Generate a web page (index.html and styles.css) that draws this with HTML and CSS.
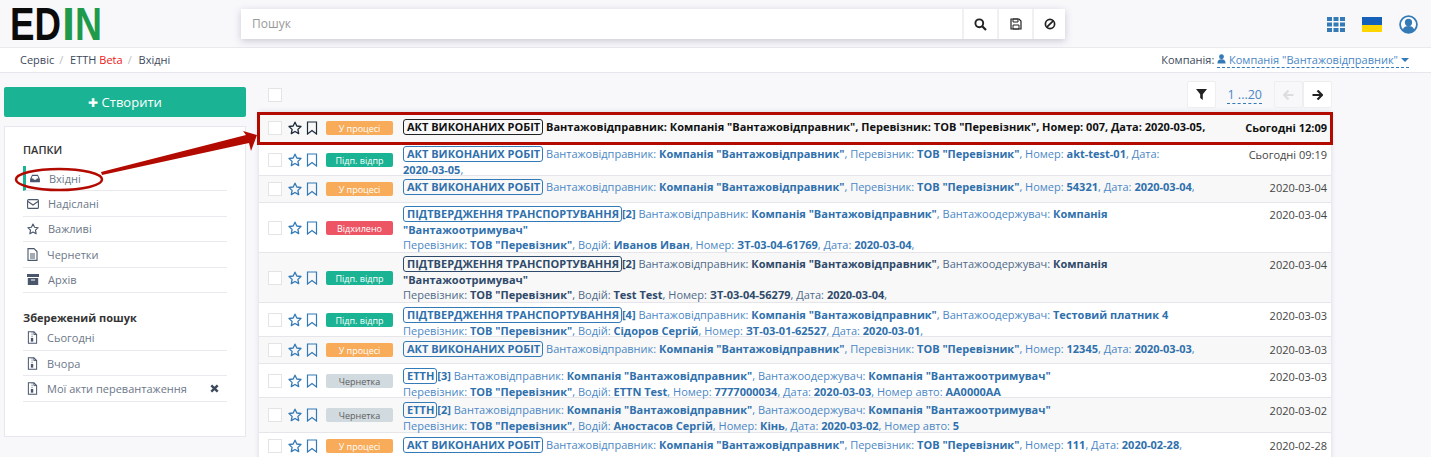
FILE: index.html
```html
<!DOCTYPE html>
<html>
	<head>
		<meta charset="UTF-8">
		<title>Вхідні</title>
		<link rel="stylesheet" href="styles.css">
	</head>
	<body>
		<svg class="defs" width="0" height="0">
			<symbol id="star" viewBox="0 0 14 14"><polygon points="7,1.2 8.8,5 13,5.5 9.9,8.4 10.7,12.6 7,10.5 3.3,12.6 4.1,8.4 1,5.5 5.2,5" fill="none" stroke="currentColor" stroke-width="1.3" stroke-linejoin="round"/></symbol>
			<symbol id="mark" viewBox="0 0 12 14"><path d="M1.5 1h9v12L6 9.5 1.5 13z" fill="none" stroke="currentColor" stroke-width="1.2"/></symbol>
			<symbol id="saved" viewBox="0 0 12 14"><path d="M1.5.8h6l3 3v9.400h-9z" fill="none" stroke="currentColor" stroke-width="1.100"/><path d="M7.500.8v3h3M5 2h1M5 4h1M5 6h1" fill="none" stroke="currentColor"/><rect x="4.200" y="7.500" width="2.600" height="4" fill="currentColor"/></symbol>
		</svg>

		<!-- шапка -->
		<header class="top">
			<svg class="logo" width="101" height="47" viewBox="0 0 101 47">
				<text x="10" y="40" textLength="51" lengthAdjust="spacingAndGlyphs" class="logo-dark">ED</text>
				<text x="62" y="40" textLength="13" lengthAdjust="spacingAndGlyphs" class="logo-green">I</text>
				<text x="75" y="40" textLength="27" lengthAdjust="spacingAndGlyphs" class="logo-green">N</text>
			</svg>
			<div class="search">
				<div class="search-input">Пошук</div>
				<button class="search-btn">
					<svg width="13" height="13" viewBox="0 0 13 13"><circle cx="5.300" cy="5.300" r="3.900" fill="none" stroke="#222" stroke-width="1.900"/><path d="M8.200 8.200l3.800 3.800" stroke="#222" stroke-width="2.200"/></svg>
				</button>
				<button class="search-btn">
					<svg width="12" height="12" viewBox="0 0 12 12"><path d="M1 1h8l2 2v8H1z" fill="none" stroke="#222" stroke-width="1.200"/><path d="M3 1h5v3H3zM3 7h6v4H3z" fill="none" stroke="#222"/></svg>
				</button>
				<button class="search-btn">
					<svg width="12" height="12" viewBox="0 0 12 12"><circle cx="6" cy="6" r="4.600" fill="none" stroke="#222" stroke-width="1.700"/><path d="M2.800 9.200l6.400-6.400" stroke="#222" stroke-width="1.700"/></svg>
				</button>
			</div>
			<div class="top-icons">
				<svg width="18" height="15" viewBox="0 0 18 15" fill="#337ab7">
					<rect width="5" height="4"/><rect x="6.500" width="5" height="4"/><rect x="13" width="5" height="4"/>
					<rect y="5.500" width="5" height="4"/><rect x="6.500" y="5.500" width="5" height="4"/><rect x="13" y="5.500" width="5" height="4"/>
					<rect y="11" width="5" height="4"/><rect x="6.500" y="11" width="5" height="4"/><rect x="13" y="11" width="5" height="4"/>
				</svg>
				<div class="flag"></div>
				<svg width="19" height="19" viewBox="0 0 19 19"><circle cx="9.500" cy="9.500" r="8.400" fill="#fff" stroke="#337ab7" stroke-width="1.800"/><circle cx="9.500" cy="7.400" r="3.600" fill="#337ab7"/><path d="M3.600 15c1-3.200 3.200-4 5.900-4s4.900.8 5.900 4a8 8 0 0 1-11.800 0z" fill="#337ab7"/></svg>
			</div>
		</header>

		<!-- хлібні крихти -->
		<nav class="crumbs">
			<div class="crumbs-path">
				<span>Сервіс</span><i>/</i>
				<span>ЕТТН <b>Beta</b></span><i>/</i>
				<span>Вхідні</span>
			</div>
			<div class="company">
				Компанія:
				<a href="#"><svg width="9" height="10" viewBox="0 0 10 11" fill="#337ab7"><circle cx="5" cy="3" r="2.700"/><path d="M.5 10.500c0-3.500 1.500-4.800 4.500-4.800s4.500 1.300 4.500 4.800z"/></svg> Компанія "Вантажовідправник"<em class="caret"></em></a>
			</div>
		</nav>

		<div class="main">
			<!-- ліва колонка -->
			<aside class="side">
				<button class="create"><span class="plus">✚</span> Створити</button>
				<div class="panel">
					<h4 class="folders-title">ПАПКИ</h4>
					<ul class="folders">
						<li class="active">
							<svg width="10" height="9" viewBox="0 0 12 11"><path d="M2.500 1h7L12 6v4H0V6z" fill="#49566b"/><path d="M3 2.500h6l1.300 3H8L7.300 7H4.700L4 5.500H1.700z" fill="#fff"/></svg>
							<span>Вхідні</span>
						</li>
						<li>
							<svg width="12" height="10" viewBox="0 0 12 10"><rect x=".6" y=".6" width="10.800" height="8.800" rx="1" fill="none" stroke="#49566b" stroke-width="1.100"/><path d="M1 2.500L6 6l5-3.500" fill="none" stroke="#49566b" stroke-width="1.100"/></svg>
							<span>Надіслані</span>
						</li>
						<li>
							<svg width="12" height="12" viewBox="0 0 14 14"><use href="#star" color="#49566b"/></svg>
							<span>Важливі</span>
						</li>
						<li>
							<svg width="11" height="13" viewBox="0 0 11 13"><path d="M1 .6h6l3 3v8.800H1z" fill="none" stroke="#49566b" stroke-width="1.100"/><path d="M3 6h5M3 8h5M3 10h5" stroke="#49566b"/></svg>
							<span>Чернетки</span>
						</li>
						<li>
							<svg width="12" height="11" viewBox="0 0 12 11" fill="#49566b"><rect width="12" height="3"/><path d="M.8 4h10.400v7H.8z"/><rect x="4" y="5.500" width="4" height="1" fill="#fff"/></svg>
							<span>Архів</span>
						</li>
					</ul>
					<h4 class="saved-title">Збережений пошук</h4>
					<ul class="folders saved">
						<li><svg width="11" height="13"><use href="#saved" color="#49566b"/></svg><span>Сьогодні</span></li>
						<li><svg width="11" height="13"><use href="#saved" color="#49566b"/></svg><span>Вчора</span></li>
						<li>
							<svg width="11" height="13"><use href="#saved" color="#49566b"/></svg><span>Мої акти перевантаження</span>
							<svg class="remove" width="9" height="9" viewBox="0 0 9 9"><path d="M1.300 1.300l6.400 6.400M7.700 1.300L1.300 7.700" stroke="#3d4a5c" stroke-width="2.400"/></svg>
						</li>
					</ul>
				</div>
			</aside>

			<!-- список документів -->
			<section class="content">
				<div class="toolbar">
					<div class="check head-check"></div>
					<div class="tools">
						<button class="tool"><svg width="11" height="11" viewBox="0 0 11 11"><path d="M0 0h11L6.800 5.200V11L4.200 9V5.200z" fill="#222"/></svg></button>
						<a class="pages" href="#">1 ...20</a>
						<div class="pager">
							<button class="tool off"><svg width="11" height="10" viewBox="0 0 11 10"><path d="M5.500.5L1 5l4.500 4.500M1.500 5H10.500" fill="none" stroke="#ddd" stroke-width="2.200"/></svg></button>
							<button class="tool"><svg width="11" height="10" viewBox="0 0 11 10"><path d="M5.500.5L10 5 5.500 9.500M9.500 5H.5" fill="none" stroke="#222" stroke-width="2.200"/></svg></button>
						</div>
					</div>
				</div>

				<div class="rows">
					<div class="row gray unread h32 p7">
						<div class="check"></div>
						<svg class="star"><use href="#star"/></svg><svg class="mark"><use href="#mark"/></svg>
						<div class="badge orange">У процесі</div>
						<div class="text"><span class="doc">АКТ ВИКОНАНИХ РОБІТ</span> Вантажовідправник: <b>Компанія "Вантажовідправник"</b>, Перевізник: <b>ТОВ "Перевізник"</b>, Номер: <b>007</b>, Дата: <b>2020-03-05</b>,</div>
						<div class="date">Сьогодні 12:09</div>
					</div>
					<div class="row h32 p2">
						<div class="check"></div>
						<svg class="star"><use href="#star"/></svg><svg class="mark"><use href="#mark"/></svg>
						<div class="badge green">Підп. відпр</div>
						<div class="text"><span class="doc">АКТ ВИКОНАНИХ РОБІТ</span> Вантажовідправник: <b>Компанія "Вантажовідправник"</b>, Перевізник: <b>ТОВ "Перевізник"</b>, Номер: <b>akt-test-01</b>, Дата: <b class="nb">2020-03-05</b>,</div>
						<div class="date">Сьогодні 09:19</div>
					</div>
					<div class="row gray h27 p3">
						<div class="check"></div>
						<svg class="star"><use href="#star"/></svg><svg class="mark"><use href="#mark"/></svg>
						<div class="badge orange">У процесі</div>
						<div class="text"><span class="doc">АКТ ВИКОНАНИХ РОБІТ</span> Вантажовідправник: <b>Компанія "Вантажовідправник"</b>, Перевізник: <b>ТОВ "Перевізник"</b>, Номер: <b>54321</b>, Дата: <b>2020-03-04</b>,</div>
						<div class="date">2020-03-04</div>
					</div>
					<div class="row h50 p3">
						<div class="check"></div>
						<svg class="star"><use href="#star"/></svg><svg class="mark"><use href="#mark"/></svg>
						<div class="badge red">Відхилено</div>
						<div class="text"><span class="doc">ПІДТВЕРДЖЕННЯ ТРАНСПОРТУВАННЯ</span><b>[2]</b> Вантажовідправник: <b>Компанія "Вантажовідправник"</b>, Вантажоодержувач: <b>Компанія "Вантажоотримувач"</b><br>Перевізник: <b>ТОВ "Перевізник"</b>, Водій: <b>Иванов Иван</b>, Номер: <b>ЗТ-03-04-61769</b>, Дата: <b>2020-03-04</b>,</div>
						<div class="date">2020-03-04</div>
					</div>
					<div class="row gray dark h50 p3">
						<div class="check"></div>
						<svg class="star"><use href="#star"/></svg><svg class="mark"><use href="#mark"/></svg>
						<div class="badge green">Підп. відпр</div>
						<div class="text"><span class="doc">ПІДТВЕРДЖЕННЯ ТРАНСПОРТУВАННЯ</span><b>[2]</b> Вантажовідправник: <b>Компанія "Вантажовідправник"</b>, Вантажоодержувач: <b>Компанія "Вантажоотримувач"</b><br>Перевізник: <b>ТОВ "Перевізник"</b>, Водій: <b>Test Test</b>, Номер: <b>ЗТ-03-04-56279</b>, Дата: <b>2020-03-04</b>,</div>
						<div class="date">2020-03-04</div>
					</div>
					<div class="row h34 p4">
						<div class="check"></div>
						<svg class="star"><use href="#star"/></svg><svg class="mark"><use href="#mark"/></svg>
						<div class="badge green">Підп. відпр</div>
						<div class="text"><span class="doc">ПІДТВЕРДЖЕННЯ ТРАНСПОРТУВАННЯ</span><b>[4]</b> Вантажовідправник: <b>Компанія "Вантажовідправник"</b>, Вантажоодержувач: <b>Тестовий платник 4</b><br>Перевізник: <b>ТОВ "Перевізник"</b>, Водій: <b>Сідоров Сергій</b>, Номер: <b>ЗТ-03-01-62527</b>, Дата: <b>2020-03-01</b>,</div>
						<div class="date">2020-03-03</div>
					</div>
					<div class="row gray h27 p4">
						<div class="check"></div>
						<svg class="star"><use href="#star"/></svg><svg class="mark"><use href="#mark"/></svg>
						<div class="badge orange">У процесі</div>
						<div class="text"><span class="doc">АКТ ВИКОНАНИХ РОБІТ</span> Вантажовідправник: <b>Компанія "Вантажовідправник"</b>, Перевізник: <b>ТОВ "Перевізник"</b>, Номер: <b>12345</b>, Дата: <b>2020-03-03</b>,</div>
						<div class="date">2020-03-03</div>
					</div>
					<div class="row h34 p4">
						<div class="check"></div>
						<svg class="star"><use href="#star"/></svg><svg class="mark"><use href="#mark"/></svg>
						<div class="badge grey">Чернетка</div>
						<div class="text"><span class="doc">ЕТТН</span><b>[3]</b> Вантажовідправник: <b>Компанія "Вантажовідправник"</b>, Вантажоодержувач: <b>Компанія "Вантажоотримувач"</b><br>Перевізник: <b>ТОВ "Перевізник"</b>, Водій: <b>ETTN Test</b>, Номер: <b>7777000034</b>, Дата: <b>2020-03-03</b>, Номер авто: <b>АА0000АА</b></div>
						<div class="date">2020-03-03</div>
					</div>
					<div class="row gray h35 p4">
						<div class="check"></div>
						<svg class="star"><use href="#star"/></svg><svg class="mark"><use href="#mark"/></svg>
						<div class="badge grey">Чернетка</div>
						<div class="text"><span class="doc">ЕТТН</span><b>[2]</b> Вантажовідправник: <b>Компанія "Вантажовідправник"</b>, Вантажоодержувач: <b>Компанія "Вантажоотримувач"</b><br>Перевізник: <b>ТОВ "Перевізник"</b>, Водій: <b>Аностасов Сергій</b>, Номер: <b>Кінь</b>, Дата: <b>2020-03-02</b>, Номер авто: <b>5</b></div>
						<div class="date">2020-03-02</div>
					</div>
					<div class="row h27 p4">
						<div class="check"></div>
						<svg class="star"><use href="#star"/></svg><svg class="mark"><use href="#mark"/></svg>
						<div class="badge orange">У процесі</div>
						<div class="text"><span class="doc">АКТ ВИКОНАНИХ РОБІТ</span> Вантажовідправник: <b>Компанія "Вантажовідправник"</b>, Перевізник: <b>ТОВ "Перевізник"</b>, Номер: <b>111</b>, Дата: <b>2020-02-28</b>,</div>
						<div class="date">2020-02-28</div>
					</div>
				</div>
			</section>
		</div>

		<!-- червона рамка, овал і стрілка поверх сторінки -->
		<div class="red-frame"></div>
		<svg class="callout" width="262" height="60" viewBox="0 0 262 60">
			<ellipse cx="59" cy="39.500" rx="43" ry="10.500" fill="none" stroke="#b30a00" stroke-width="2.500"/>
			<polygon points="101,32 246,-5 243,-9 257,-5 251,11 249,3 102,35" fill="#b30a00"/>
		</svg>
	</body>
</html>
```

FILE: styles.css
```css
*{
	margin: 0;
	padding: 0;
	box-sizing: border-box;
}

html, body{
	height: 457px;
	overflow: hidden;
}

body{
	background-color: #f8f8fb;
	font-family: "Open Sans", "Noto Sans", sans-serif;
	font-size: 11px;
	color: #3d4a5c;
	position: relative;
}

.defs{
	position: absolute;
}

button{
	font-family: inherit;
	border: 0;
	background: none;
}

/*шапка*/
.top{
	height: 47px;
	display: flex;
	align-items: flex-start;
	padding-right: 12px;
}

.logo{
	flex: none;
	margin-right: 140px;
	overflow: visible;
}

.logo text{
	font-family: "Liberation Sans", sans-serif;
	font-weight: bold;
	font-size: 46px;
}

.logo-dark{
	fill: #0b0b0b;
}

.logo-green{
	fill: #1f9a4a;
}

.search{
	width: 824px;
	height: 30px;
	margin-top: 9px;
	display: flex;
	background-color: #fff;
	box-shadow: 0 2px 7px rgba(60, 65, 100, .25);
}

.search-input{
	flex: 1;
	padding-left: 11px;
	font-size: 12px;
	line-height: 29px;
	color: #999;
}

.search-btn{
	width: 35px;
	border-left: 2px solid #f0f0f2;
	display: flex;
	align-items: center;
	justify-content: center;
}

.search-btn:last-child{
	width: 33px;
}

.top-icons{
	margin-left: auto;
	margin-top: 15px;
	display: flex;
	align-items: center;
	gap: 17px;
	padding-right: 1px;
}

.flag{
	width: 20px;
	height: 15px;
	background: linear-gradient(#1560b8 50%, #ffd500 50%);
}

/*хлібні крихти*/
.crumbs{
	height: 26px;
	background-color: #fff;
	border-top: 1px solid #e9e9ee;
	border-bottom: 1px solid #e6e6ec;
	display: flex;
	align-items: center;
	justify-content: space-between;
	padding: 0 22px 0 20px;
	line-height: 24px;
}

.crumbs-path i{
	font-style: normal;
	color: #bbb;
	margin: 0 4px 0 5px;
}

.crumbs-path b{
	font-weight: normal;
	color: #f01414;
}

.company a{
	color: #4b87c5;
	text-decoration: none;
	border-bottom: 1px dashed #337ab7;
}

.caret{
	display: inline-block;
	border: 4px solid transparent;
	border-top-color: #337ab7;
	border-bottom: 0;
	vertical-align: 2px;
	margin-left: 3px;
}

/*основна частина*/
.main{
	display: flex;
	padding: 8px 100px 0 4px;
}

.side{
	width: 242px;
	flex: none;
	margin-right: 13px;
	padding-top: 6px;
}

.create{
	display: block;
	width: 100%;
	height: 30px;
	background-color: #1ab394;
	color: #fff;
	border-radius: 2px;
	font-size: 13px;
}

.plus{
	font-size: 12px;
}

.panel{
	height: 311px;
	margin-top: 9px;
	background-color: #fff;
	border: 1px solid #e7e7f0;
	padding: 16px 18px 0 18px;
}

.folders-title{
	font-size: 11px;
	font-weight: 600;
	color: #333;
	line-height: 14px;
}

.saved-title{
	margin-top: 18px;
	font-size: 11px;
	font-weight: bold;
	color: #333;
	line-height: 14px;
}

.folders{
	list-style: none;
	margin-top: 9px;
}

.folders li{
	height: 25.400px;
	border-bottom: 1px solid #e9e9ee;
	display: flex;
	align-items: center;
	padding-left: 4px;
	color: #6c7789;
}

.folders li span{
	margin-left: 9px;
}

.folders .active{
	border-left: 3px solid #1ab394;
	padding-left: 4px;
}

.saved{
	margin-top: .500px;
}

.remove{
	margin-left: auto;
	margin-right: 8px;
}

/*список*/
.content{
	flex: 1;
	min-width: 0;
}

.toolbar{
	height: 31px;
	display: flex;
	justify-content: space-between;
	align-items: flex-start;
}

.head-check{
	margin: 7px 0 0 9px;
}

.tools{
	display: flex;
	align-items: flex-start;
	margin-right: -1px;
}

.tool{
	width: 29px;
	height: 27px;
	background-color: #fff;
	border: 1px solid #eee;
	border-radius: 2px;
	display: flex;
	align-items: center;
	justify-content: center;
}

.pages{
	margin: 5px 12px 0 11px;
	font-size: 12.500px;
	line-height: 17px;
	color: #4b87c5;
	text-decoration: none;
	border-bottom: 1px dashed #337ab7;
}

.pager{
	display: flex;
}

.off{
	background-color: transparent;
}

.rows{
	background-color: #fff;
	box-shadow: 0 0 5px rgba(60, 65, 100, .18);
}

.row{
	display: flex;
	align-items: center;
	padding-left: 9px;
	color: #4b87c5;
	border-bottom: 1px solid #e6e6ea;
	line-height: 15px;
}

.h27{ height: 27px; }
.h32{ height: 32px; }
.h34{ height: 34px; }
.h35{ height: 35px; }
.h50{ height: 50px; }

.gray{
	background-color: #f8f8f8;
}

.check{
	width: 14px;
	height: 14px;
	flex: none;
	background-color: #fff;
	border: 1px solid #e4e4e4;
}

.star{
	width: 14px;
	height: 14px;
	flex: none;
	margin-left: 6px;
	color: #337ab7;
}

.mark{
	width: 12px;
	height: 14px;
	flex: none;
	margin-left: 4px;
	color: #337ab7;
}

.badge{
	width: 67px;
	height: 14px;
	flex: none;
	margin-left: 8px;
	border-radius: 2px;
	color: #fff;
	font-size: 9px;
	line-height: 15px;
	text-align: center;
}

.orange{ background-color: #f8ac59; }
.green{ background-color: #1ab394; }
.red{ background-color: #ed5565; }
.grey{ background-color: #d1dade; color: #5e5e5e; }

.text{
	width: 815px;
	flex: none;
	margin-left: 10px;
	align-self: flex-start;
}

.text b{
	color: #2f70ad;
}

.text .nb{
	white-space: nowrap;
}

.doc{
	display: inline-block;
	border: 1px solid #337ab7;
	border-radius: 3px;
	padding: 0 2px 0 3px;
	font-weight: bold;
	color: #2f70ad;
	line-height: 14px;
}

.date{
	margin-left: auto;
	align-self: flex-start;
	padding-right: 4px;
	color: #444;
	line-height: 17px;
	white-space: nowrap;
}

/*відступ тексту зверху*/
.p2 .text, .p2 .date{ padding-top: 2px; }
.p3 .text, .p3 .date{ padding-top: 3px; }
.p4 .text, .p4 .date{ padding-top: 4px; }
.p7 .text, .p7 .date{ padding-top: 7px; }

/*непрочитаний документ*/
.unread .text,
.unread .text b,
.unread .doc,
.unread .date{
	color: #111;
	font-weight: bold;
}

.unread .doc{
	border-color: #222;
}

.unread .star,
.unread .mark{
	color: #1d2a3a;
}

/*темніший рядок*/
.dark .text{
	color: #4f6a88;
}

.dark .text b,
.dark .doc{
	color: #2f4a6a;
}

.dark .doc{
	border-color: #2f4a6a;
}

/*поверх сторінки*/
.red-frame{
	position: absolute;
	left: 257px;
	top: 112px;
	width: 1076px;
	height: 33px;
	border: 3px solid #b30a00;
}

.callout{
	position: absolute;
	left: 0;
	top: 140px;
	overflow: visible;
}
```
